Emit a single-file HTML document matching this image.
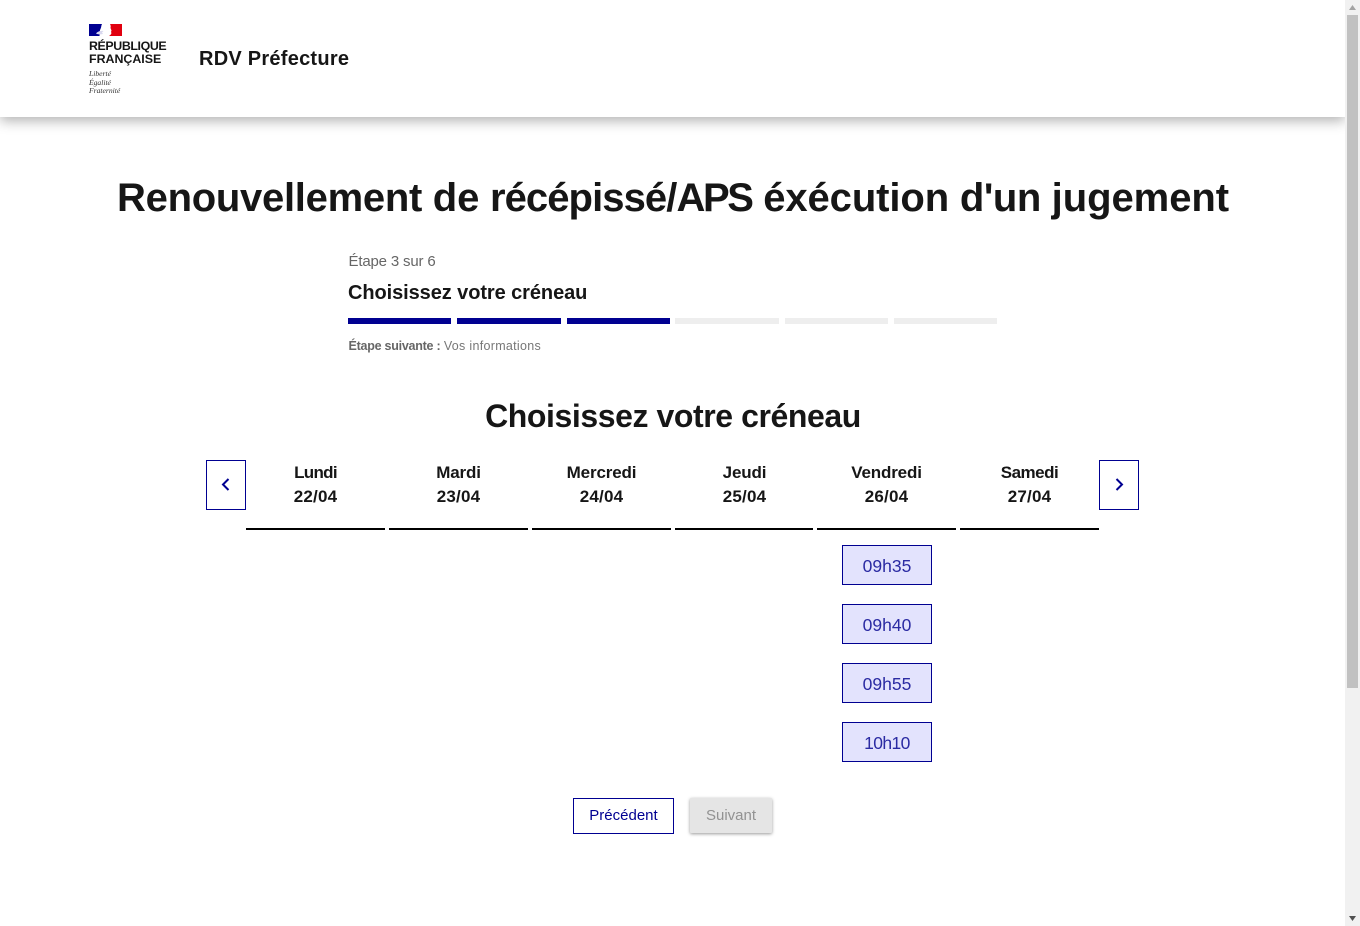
<!DOCTYPE html>
<html lang="fr"><head><meta charset="utf-8"><title>RDV Préfecture</title>
<style>
html,body{margin:0;padding:0;background:#fff;width:1360px;height:926px;overflow:hidden}
body{font-family:"Liberation Sans",sans-serif;color:#161616;position:relative}
.a{position:absolute;white-space:nowrap}
.c{text-align:center}
header{position:absolute;left:0;top:0;width:1345px;height:117px;background:#fff;box-shadow:0 4px 12px rgba(0,0,0,.3)}
.bar{position:absolute;top:318px;height:6px;background:#eee}
.on{background:#000091}
.line{position:absolute;top:528px;height:2px;background:#000}
.day{position:absolute;top:461px;width:139px;text-align:center;font-weight:700;font-size:17px;line-height:24px;color:#161616;letter-spacing:-.15px}
.day i{font-style:normal;letter-spacing:.2px}
.nav{position:absolute;top:460px;width:38px;height:48px;border:1px solid #000091;background:#fff}
.slot{position:absolute;left:842px;width:88px;height:38px;border:1px solid #000091;background:#e3e3fd;color:#2b2ba3;font-size:17.5px;line-height:40px;text-align:center}
</style></head><body>
<header></header>
<svg class="a" style="left:89px;top:24px" width="33" height="12" viewBox="0 0 33 12">
<rect width="33" height="12" fill="#fff"/>
<path d="M0 0H13C12 2 12.500 3 11.500 5 10.500 6.500 11 8 10.500 12H0Z" fill="#000091"/>
<path d="M21 0H33V12H20C22 10.500 23 9.500 22 8L22.500 6.500 21.500 4C22 2 21.500 1 21 0Z" fill="#e1000f"/>
<path d="M7 9.500C8.500 7.500 11 6.500 14.500 7L13 8.500 14 10C12 10.500 9.500 10.500 8 10Z" fill="#d8d8ee"/>
</svg>
<div class="a" style="left:89px;top:40px;font-weight:700;font-size:12.4px;line-height:13px;color:#161616"><span style="letter-spacing:-.4px">RÉPUBLIQUE</span><br>FRANÇAISE</div>
<div class="a" style="left:89px;top:70px;font-family:'Liberation Serif',serif;font-style:italic;font-size:7.6px;line-height:8.500px;color:#333">Liberté<br>Égalité<br>Fraternité</div>
<div class="a" style="left:199px;top:46px;font-weight:700;font-size:20px;line-height:26px;color:#161616;letter-spacing:.25px">RDV Préfecture</div>

<h1 class="a" style="margin:0;left:117px;top:174px;font-size:40px;line-height:48px;font-weight:700;color:#161616;letter-spacing:-.42px"><span style="letter-spacing:-.28px">Renouvellement</span> <span style="letter-spacing:-.1px">de</span> <span style="letter-spacing:-.92px">récépissé/</span><span style="letter-spacing:-2.4px">APS</span> <span style="letter-spacing:-.09px;margin-left:1px">éxécution</span> d'un <span style="letter-spacing:-.05px">jugement</span></h1>

<div class="a" style="left:348.500px;top:252px;font-size:15px;line-height:20px;color:#666;letter-spacing:-.17px">Étape 3 sur 6</div>
<div class="a" style="left:348px;top:280px;font-size:20px;line-height:26px;font-weight:700;color:#161616;letter-spacing:-.08px">Choisissez votre créneau</div>
<div class="bar on" style="left:348px;width:103px"></div>
<div class="bar on" style="left:457px;width:104px"></div>
<div class="bar on" style="left:567px;width:103px"></div>
<div class="bar" style="left:675px;width:104px"></div>
<div class="bar" style="left:785px;width:103px"></div>
<div class="bar" style="left:894px;width:103px"></div>
<div class="a" style="left:348.500px;top:336px;font-size:12.500px;line-height:20px;color:#666"><b style="letter-spacing:-.25px">Étape suivante :</b> <span style="letter-spacing:.3px;color:#777">Vos informations</span></div>

<h2 class="a c" style="margin:0;left:373px;width:600px;top:396px;font-size:32px;line-height:40px;font-weight:700;color:#161616;letter-spacing:-.42px">Choisissez votre créneau</h2>

<div class="nav" style="left:206px"><svg width="38" height="48"><path d="M21.500 18 16 23.500 21.500 29" fill="none" stroke="#000091" stroke-width="2"/></svg></div>
<div class="nav" style="left:1099px"><svg width="38" height="48"><path d="M16.500 18 22 23.500 16.500 29" fill="none" stroke="#000091" stroke-width="2"/></svg></div>

<div class="day" style="left:246px"><span style="letter-spacing:-.7px">Lundi</span><br><i>22/04</i></div>
<div class="day" style="left:389px">Mardi<br><i>23/04</i></div>
<div class="day" style="left:532px">Mercredi<br><i>24/04</i></div>
<div class="day" style="left:675px">Jeudi<br><i>25/04</i></div>
<div class="day" style="left:817px">Vendredi<br><i>26/04</i></div>
<div class="day" style="left:960px"><span style="letter-spacing:-.5px">Samedi</span><br><i>27/04</i></div>
<div class="line" style="left:246px;width:139px"></div>
<div class="line" style="left:389px;width:139px"></div>
<div class="line" style="left:532px;width:139px"></div>
<div class="line" style="left:675px;width:138px"></div>
<div class="line" style="left:817px;width:139px"></div>
<div class="line" style="left:960px;width:139px"></div>

<div class="slot" style="top:545px">09h35</div>
<div class="slot" style="top:604px">09h40</div>
<div class="slot" style="top:663px">09h55</div>
<div class="slot" style="top:722px;letter-spacing:-.6px">10h10</div>

<div class="a c" style="left:573px;top:798px;width:99px;height:34px;border:1px solid #000091;color:#000091;font-size:15px;line-height:33px">Précédent</div>
<div class="a c" style="left:690px;top:798px;width:82px;height:35px;background:#e5e5e5;color:#929292;font-size:15px;line-height:35px;border-radius:1px;box-shadow:0 1px 3px rgba(0,0,0,.4)">Suivant</div>

<div class="a" style="left:1345px;top:0;width:15px;height:926px;background:#f1f1f1"></div>
<div class="a" style="left:1347px;top:15px;width:11px;height:673px;background:#c1c1c1"></div>
<svg class="a" style="left:1345px;top:0" width="15" height="926"><path d="M4 10 7.500 5 11 10Z" fill="#a3a3a3"/><path d="M4 916 7.500 921 11 916Z" fill="#505050"/></svg>
</body></html>
